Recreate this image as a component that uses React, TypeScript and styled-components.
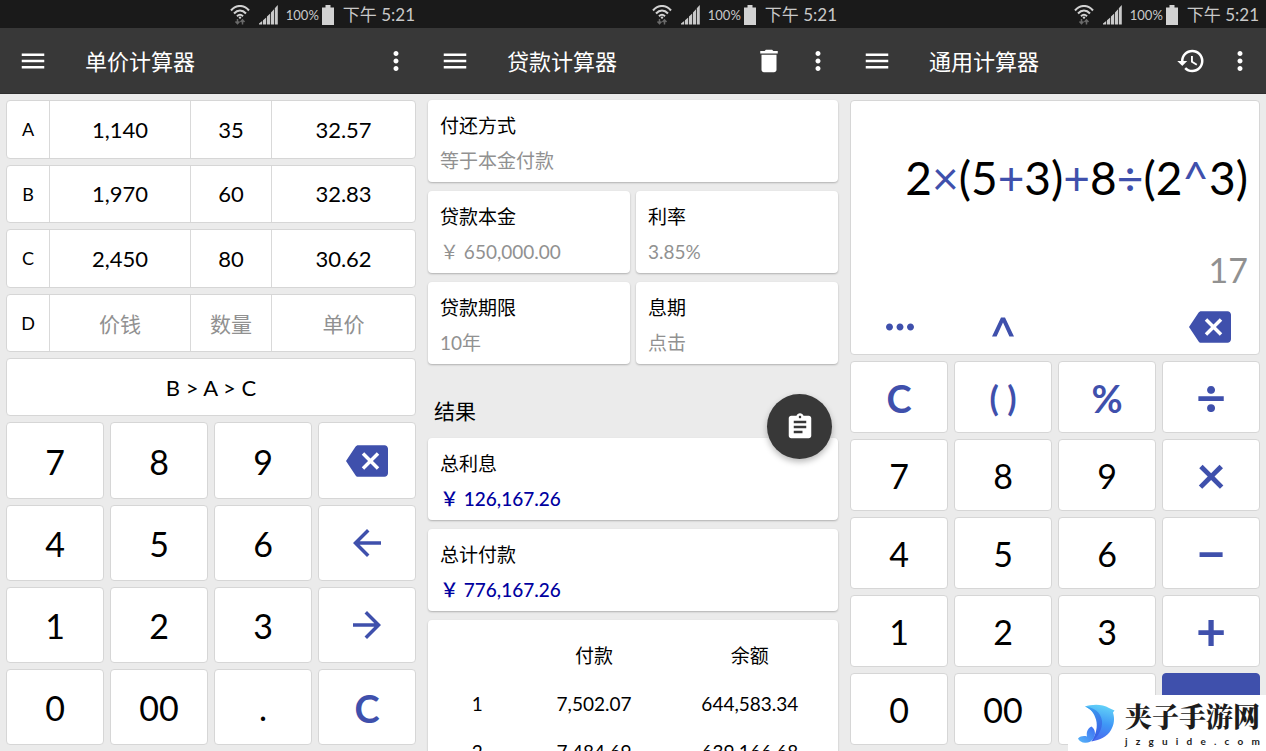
import React from "react";
import styled, { createGlobalStyle } from "styled-components";
import {
  MdArrowBack,
  MdArrowForward,
  MdAssignment,
  MdBackspace,
  MdDelete,
  MdHistory,
  MdMenu,
  MdMoreHoriz,
  MdMoreVert,
} from "react-icons/md";

const ACCENT = "#3f50ac";

const GlobalStyle = createGlobalStyle`
  * { box-sizing: border-box; }
  body {
    margin: 0;
    background: #ebebeb;
    color: #000;
    font-family: Lato, "Noto Sans CJK SC", sans-serif;
  }
  button, input { font: inherit; color: inherit; }
`;

/* ---------- shell ---------- */

const Screens = styled.main`
  display: grid;
  grid-template-columns: repeat(3, minmax(0, 1fr));
  height: 100vh;
  overflow: hidden;
`;

const Phone = styled.section`
  display: flex;
  flex-direction: column;
  min-height: 0;
  overflow: hidden;
`;

const StatusBar = styled.div`
  flex: none;
  display: flex;
  align-items: center;
  justify-content: flex-end;
  height: 28px;
  padding: 2px 7px 0;
  background: #1a1a1a;
  color: #c9c9c9;
  font-size: 17px;
  line-height: 26px;
  white-space: nowrap;

  svg { flex: none; }
`;

const SignalGap = styled.span`
  display: flex;
  margin-left: 9px;
`;

const BatteryLevel = styled.span`
  margin: 0 3px 0 8px;
  font-size: 13px;
`;

const Clock = styled.span`
  margin-left: 9px;
`;

const AppBar = styled.header`
  flex: none;
  display: flex;
  align-items: center;
  height: 66px;
  padding: 0 11px 0 18px;
  background: #383838;
  border-bottom: 1px solid #2e2e2e;
  color: #fff;
`;

const Title = styled.h1`
  flex: 1;
  margin: 0 0 0 37px;
  padding-top: 2px;
  font-size: 22px;
  font-weight: 400;
  line-height: 32px;
`;

const IconButton = styled.button`
  display: flex;
  padding: 0;
  border: 0;
  background: none;
  font-size: 30px;
`;

const BarActions = styled.div`
  display: flex;
  gap: 19px;
`;

/* ---------- shared surfaces ---------- */

const Body = styled.div`
  flex: 1;
  min-height: 0;
  padding: 6px;
`;

const Tile = styled.div`
  border: 1px solid #d6d6d6;
  border-radius: 4px;
  background: #fff;
`;

const KeyGrid = styled.div`
  display: grid;
  grid-template-columns: repeat(4, minmax(0, 1fr));
  grid-auto-rows: minmax(0, 1fr);
  gap: 6px;
  min-height: 0;
`;

const Key = styled.button<{ $tone?: "digit" | "action" | "filled"; $size?: number }>`
  display: flex;
  align-items: center;
  justify-content: center;
  padding: 2px 0 0;
  border: 1px solid ${(p) => (p.$tone === "filled" ? ACCENT : "#d6d6d6")};
  border-radius: 4px;
  background: ${(p) => (p.$tone === "filled" ? ACCENT : "#fff")};
  color: ${(p) => (p.$tone === "action" ? ACCENT : "#000")};
  font-size: ${(p) => p.$size ?? 34}px;
  font-weight: ${(p) => (p.$tone === "action" ? 700 : 400)};
  line-height: 40px;
  white-space: pre;

  &:has(svg) { padding: 0; }
`;

const OperatorKey = styled(Key).attrs({ $tone: "action", $size: 52 })`
  padding: 0 0 2px;
`;

/* ---------- unit price ---------- */

const UnitBody = styled(Body)`
  display: grid;
  grid-template-rows: minmax(0, 316fr) minmax(0, 322fr);
  gap: 6px;
`;

const Comparison = styled.div`
  display: grid;
  grid-template-rows: minmax(0, 252fr) minmax(0, 58fr);
  gap: 6px;
`;

const PriceTable = styled.table`
  display: block;
  min-height: 0;
`;

const PriceBody = styled.tbody`
  display: grid;
  grid-auto-rows: minmax(0, 1fr);
  gap: 6px;
  height: 100%;
`;

const PriceRow = styled(Tile).attrs({ as: "tr" })`
  display: grid;
  grid-template-columns: 42fr 141fr 81fr 144fr;
`;

const cell = `
  display: flex;
  align-items: center;
  justify-content: center;
  min-width: 0;
  padding: 0;
`;

const RowName = styled.th`
  ${cell}
  font-size: 18px;
  font-weight: 400;
`;

const PriceCell = styled.td`
  ${cell}
  border-left: 1px solid #d9d9d9;
  font-size: 22px;
`;

const Field = styled.input`
  width: 100%;
  padding: 0;
  border: 0;
  background: none;
  text-align: center;
  outline: none;

  &::placeholder { color: #919191; font-size: 21px; opacity: 1; }
`;

const Ranking = styled(Tile)`
  display: flex;
  align-items: center;
  justify-content: center;
  font-size: 22px;
`;

/* ---------- loan ---------- */

const LoanBody = styled(Body)`
  display: flex;
  flex-direction: column;
  gap: 9px;
  overflow: hidden;
`;

const Pair = styled.div`
  flex: none;
  display: grid;
  grid-template-columns: 1fr 1fr;
  gap: 6px;
`;

const Card = styled.div`
  flex: none;
  height: 82px;
  padding: 8px 12px 4px;
  border-radius: 4px;
  background: #fff;
  box-shadow: 0 1px 2px rgba(0, 0, 0, 0.25);
  font-size: 19px;
  line-height: 35px;
`;

const Value = styled.div<{ $strong?: boolean }>`
  color: ${(p) => (p.$strong ? "#0000a0" : "#919191")};
  font-weight: ${(p) => (p.$strong ? 500 : 400)};
`;

const ResultHead = styled.div`
  flex: none;
  position: relative;
  height: 56px;
  padding: 22px 6px 2px;
`;

const ResultTitle = styled.h2`
  margin: 0;
  font-size: 21px;
  font-weight: 400;
  line-height: 32px;
`;

const CopyButton = styled.button`
  position: absolute;
  right: 6px;
  bottom: -30px;
  display: flex;
  align-items: center;
  justify-content: center;
  width: 65px;
  height: 65px;
  padding: 0;
  border: 0;
  border-radius: 50%;
  background: #383838;
  box-shadow: 0 3px 6px rgba(0, 0, 0, 0.28);
  color: #fff;
  font-size: 30px;
`;

const ScheduleCard = styled(Card)`
  height: auto;
  padding: 12px 0;
`;

const Schedule = styled.table`
  width: 100%;
  table-layout: fixed;
  border-collapse: collapse;

  th, td {
    height: 48px;
    padding: 0;
    font-size: 19px;
    font-weight: 400;
    line-height: 24px;
    text-align: center;
  }
`;

/* ---------- general ---------- */

const GeneralBody = styled(Body)`
  display: grid;
  grid-template-rows: minmax(0, 255fr) minmax(0, 384fr);
  gap: 6px;
`;

const Display = styled(Tile)`
  display: flex;
  flex-direction: column;
  justify-content: flex-end;
  text-align: right;
`;

const Expression = styled.div`
  margin-bottom: 40px;
  padding: 0 11px;
  font-size: 46px;
  line-height: 60px;
  white-space: nowrap;

  span { color: ${ACCENT}; }
`;

const Answer = styled.output`
  display: block;
  margin-bottom: 8px;
  padding: 0 11px;
  color: #919191;
  font-size: 34px;
  line-height: 44px;
`;

const DisplayTools = styled.div`
  display: grid;
  grid-template-columns: repeat(4, minmax(0, 1fr));
  gap: 6px;
  height: 54px;
`;

const ToolButton = styled.button<{ $column: number }>`
  grid-column: ${(p) => p.$column};
  display: flex;
  align-items: center;
  justify-content: center;
  padding: 0;
  border: 0;
  background: none;
  color: ${ACCENT};
  font-size: 42px;
`;

/* ---------- site mark ---------- */

const SiteMark = styled.aside`
  position: fixed;
  right: 0;
  bottom: 0;
  display: flex;
  align-items: center;
  gap: 10px;
  height: 56px;
  padding: 0 6px 0 9px;
  background: #fff;
  color: #1c1c1c;
`;

const SiteName = styled.div`
  font-family: "Noto Serif CJK SC", "Noto Sans CJK SC", serif;
  font-size: 27px;
  font-weight: 900;
  line-height: 32px;
`;

const SiteAddress = styled.div`
  display: flex;
  justify-content: space-between;
  margin-top: 3px;
  font-size: 10px;
  font-weight: 700;
  line-height: 12px;
`;

/* ---------- drawings ---------- */

const WifiIcon = () => (
  <svg width="20" height="20" viewBox="0 0 20 20" fill="none" stroke="#d2d2d2" strokeWidth="2">
    <path d="M1 5.500C6-.6 14-.6 19 5.500" />
    <path d="M4 8.500c3.600-4 8.400-4 12 0" />
    <path d="M7 11.200c2-2 4-2 6 0" />
    <circle cx="10" cy="12.600" r="1.200" fill="#d2d2d2" stroke="none" />
    <path d="M7.500 14v4.500M5.500 16.500l2 2.200 2-2.200M12.500 19.500V15M10.500 17l2-2.200 2 2.200" stroke="#6a6a6a" strokeWidth="1.500" />
  </svg>
);

const SignalIcon = () => (
  <svg width="19" height="20" viewBox="0 0 19 20" fill="#c9c9c9">
    <path d="M0 19.500v-1l3.200-2.600v3.600zM4 15.200l3.200-2.700v7H4zM8 11.400l3.200-3v11.100H8zM12 7.400l3-3.200v15.300h-3zM15.800 3.200L18.800 0v19.500h-3z" />
  </svg>
);

const BatteryIcon = () => (
  <svg width="12" height="20" viewBox="0 0 12 20" fill="#d2d2d2">
    <path d="M3.500 0h5v2.500H12V20H0V2.500h3.500z" />
  </svg>
);

const CaretIcon = () => (
  <svg width="22" height="20" viewBox="0 0 22 20" fill="currentColor">
    <path d="M0 19.500L9 .5h4l9 19h-4.600L11 5.600 4.600 19.500z" />
  </svg>
);

const DolphinLogo = () => (
  <svg width="38" height="42" viewBox="6 5 38 42">
    <defs>
      <linearGradient id="body" x1="0.600" y1="0" x2="0.400" y2="1">
        <stop offset="0" stopColor="#62d2f8" />
        <stop offset="0.500" stopColor="#3f97f6" />
        <stop offset="1" stopColor="#4a66ee" />
      </linearGradient>
      <linearGradient id="back" x1="0" y1="0" x2="0.300" y2="1">
        <stop offset="0" stopColor="#3aa5f0" />
        <stop offset="1" stopColor="#3b5fe6" />
      </linearGradient>
      <linearGradient id="tail" x1="1" y1="0" x2="0" y2="1">
        <stop offset="0" stopColor="#3d6df2" />
        <stop offset="1" stopColor="#58b8f8" />
      </linearGradient>
    </defs>
    <path fill="url(#body)" d="M14 9.500C20 7.500 31 6.500 38 11l5.500 2.500-1.500 2C44 22 43 28 40 33c-4 7-11 10-19.500 11.500C26 38 27.500 30 26 22.500 24 16 20 12 14 9.500z" />
    <path fill="url(#back)" d="M14 9.500C22 10 30 15 31 24c.6 8-4 16-10.500 20.500C25 37 27 30 25 22.500 23 16 20 12 14 9.500z" />
    <path fill="url(#tail)" d="M7 41.500c2.500-2.500 6-3 9-2-.8-4 .4-8 4.500-10 4 3 4.500 8 2 12-1.800 3-5 4.500-8.500 4.300-3-.2-6-1.500-7-4.300z" />
  </svg>
);

/* ---------- screens ---------- */

const Status = () => (
  <StatusBar>
    <WifiIcon />
    <SignalGap>
      <SignalIcon />
    </SignalGap>
    <BatteryLevel>100%</BatteryLevel>
    <BatteryIcon />
    <Clock>下午 5:21</Clock>
  </StatusBar>
);

const Bar = ({ title, children }: { title: string; children?: React.ReactNode }) => (
  <AppBar>
    <IconButton aria-label="菜单"><MdMenu /></IconButton>
    <Title>{title}</Title>
    <BarActions>
      {children}
      <IconButton aria-label="更多"><MdMoreVert /></IconButton>
    </BarActions>
  </AppBar>
);

const items = [
  { name: "A", price: "1,140", count: "35", unit: "32.57" },
  { name: "B", price: "1,970", count: "60", unit: "32.83" },
  { name: "C", price: "2,450", count: "80", unit: "30.62" },
  { name: "D", price: "", count: "", unit: "" },
];

const UnitPrice = () => (
  <Phone>
    <Status />
    <Bar title="单价计算器" />
    <UnitBody>
      <Comparison>
        <PriceTable>
          <PriceBody>
            {items.map((item) => (
              <PriceRow key={item.name}>
                <RowName scope="row">{item.name}</RowName>
                <PriceCell>
                  <Field aria-label={`${item.name} 价钱`} placeholder="价钱" defaultValue={item.price} />
                </PriceCell>
                <PriceCell>
                  <Field aria-label={`${item.name} 数量`} placeholder="数量" defaultValue={item.count} />
                </PriceCell>
                <PriceCell>
                  <Field aria-label={`${item.name} 单价`} placeholder="单价" value={item.unit} readOnly />
                </PriceCell>
              </PriceRow>
            ))}
          </PriceBody>
        </PriceTable>
        <Ranking>B &gt; A &gt; C</Ranking>
      </Comparison>
      <KeyGrid>
        <Key>7</Key>
        <Key>8</Key>
        <Key>9</Key>
        <Key $tone="action" $size={42} aria-label="删除"><MdBackspace /></Key>
        <Key>4</Key>
        <Key>5</Key>
        <Key>6</Key>
        <Key $tone="action" $size={42} aria-label="向左"><MdArrowBack /></Key>
        <Key>1</Key>
        <Key>2</Key>
        <Key>3</Key>
        <Key $tone="action" $size={42} aria-label="向右"><MdArrowForward /></Key>
        <Key>0</Key>
        <Key>00</Key>
        <Key>.</Key>
        <Key $tone="action" $size={38}>C</Key>
      </KeyGrid>
    </UnitBody>
  </Phone>
);

const InfoCard = ({ label, value, strong }: { label: string; value: string; strong?: boolean }) => (
  <Card>
    <div>{label}</div>
    <Value $strong={strong}>{value}</Value>
  </Card>
);

const Loan = () => (
  <Phone>
    <Status />
    <Bar title="贷款计算器">
      <IconButton aria-label="清除"><MdDelete /></IconButton>
    </Bar>
    <LoanBody>
      <InfoCard label="付还方式" value="等于本金付款" />
      <Pair>
        <InfoCard label="贷款本金" value="￥ 650,000.00" />
        <InfoCard label="利率" value="3.85%" />
      </Pair>
      <Pair>
        <InfoCard label="贷款期限" value="10年" />
        <InfoCard label="息期" value="点击" />
      </Pair>
      <ResultHead>
        <ResultTitle>结果</ResultTitle>
        <CopyButton aria-label="复制结果"><MdAssignment /></CopyButton>
      </ResultHead>
      <InfoCard label="总利息" value="￥ 126,167.26" strong />
      <InfoCard label="总计付款" value="￥ 776,167.26" strong />
      <ScheduleCard>
        <Schedule>
          <colgroup>
            <col width="24%" />
            <col width="33%" />
            <col width="43%" />
          </colgroup>
          <thead>
            <tr>
              <td />
              <th scope="col">付款</th>
              <th scope="col">余额</th>
            </tr>
          </thead>
          <tbody>
            <tr>
              <td>1</td>
              <td>7,502.07</td>
              <td>644,583.34</td>
            </tr>
            <tr>
              <td>2</td>
              <td>7,484.69</td>
              <td>639,166.68</td>
            </tr>
          </tbody>
        </Schedule>
      </ScheduleCard>
    </LoanBody>
  </Phone>
);

const General = () => (
  <Phone>
    <Status />
    <Bar title="通用计算器">
      <IconButton aria-label="历史"><MdHistory /></IconButton>
    </Bar>
    <GeneralBody>
      <Display>
        <Expression>
          2<span>×</span>(5<span>+</span>3)<span>+</span>8<span>÷</span>(2<span>^</span>3)
        </Expression>
        <Answer>17</Answer>
        <DisplayTools>
          <ToolButton $column={1} aria-label="更多功能"><MdMoreHoriz /></ToolButton>
          <ToolButton $column={2} aria-label="乘方"><CaretIcon /></ToolButton>
          <ToolButton $column={4} aria-label="删除"><MdBackspace /></ToolButton>
        </DisplayTools>
      </Display>
      <KeyGrid>
        <Key $tone="action" $size={38}>C</Key>
        <Key $tone="action" $size={34}>( )</Key>
        <Key $tone="action" $size={38}>%</Key>
        <OperatorKey>÷</OperatorKey>
        <Key>7</Key>
        <Key>8</Key>
        <Key>9</Key>
        <OperatorKey>×</OperatorKey>
        <Key>4</Key>
        <Key>5</Key>
        <Key>6</Key>
        <OperatorKey>−</OperatorKey>
        <Key>1</Key>
        <Key>2</Key>
        <Key>3</Key>
        <OperatorKey>+</OperatorKey>
        <Key>0</Key>
        <Key>00</Key>
        <Key aria-label="小数点" />
        <Key $tone="filled" aria-label="等于" />
      </KeyGrid>
    </GeneralBody>
  </Phone>
);

export default function App() {
  return (
    <>
      <GlobalStyle />
      <Screens>
        <UnitPrice />
        <Loan />
        <General />
      </Screens>
      <SiteMark>
        <DolphinLogo />
        <div>
          <SiteName>夹子手游网</SiteName>
          <SiteAddress>
            {"jzguide.com".split("").map((letter, index) => (
              <span key={index}>{letter}</span>
            ))}
          </SiteAddress>
        </div>
      </SiteMark>
    </>
  );
}
